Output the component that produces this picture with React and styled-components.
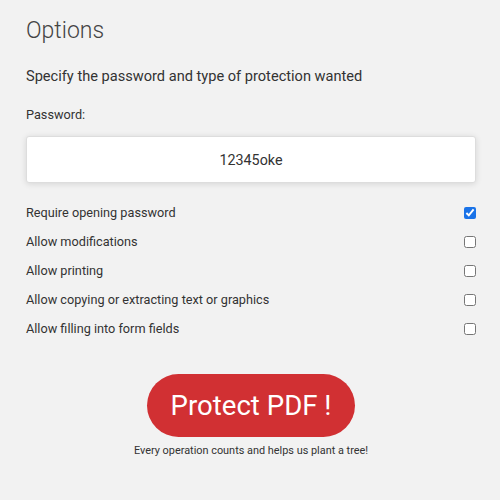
import styled, { createGlobalStyle } from "styled-components";

const Global = createGlobalStyle`
  html, body {
    margin: 0;
    background: #f2f2f2;
    font-family: Roboto, "Liberation Sans", sans-serif;
    color: #333;
  }
`;

const Page = styled.main`
  padding: 14px 24px 0 26px;
  width: 500px;
  box-sizing: border-box;
`;

const Title = styled.h1`
  margin: 0;
  font-weight: 300;
  font-size: 23px;
  line-height: 34px;
  color: #444;
`;

const Lead = styled.p`
  margin: 18px 0 0;
  font-size: 14.6px;
  line-height: 20px;
  color: #333;
`;

const Label = styled.p`
  margin: 20px 0 0;
  font-size: 12.7px;
  line-height: 18px;
  color: #333;
`;

const Field = styled.input`
  display: block;
  box-sizing: border-box;
  width: 450px;
  height: 47px;
  margin-top: 12px;
  border: 1px solid #ddd;
  border-radius: 3px;
  background: #fff;
  box-shadow: 0 1px 6px rgba(0, 0, 0, 0.12);
  text-align: center;
  font-family: inherit;
  font-size: 14.3px;
  color: #333;
  outline: none;
`;

const Options = styled.ul`
  list-style: none;
  margin: 15px 0 0;
  padding: 0;
  width: 450px;
`;

const Row = styled.li`
  display: flex;
  align-items: center;
  justify-content: space-between;
  height: 29px;
  font-size: 12.7px;
  color: #333;
`;

const Check = styled.input.attrs({ type: "checkbox" })`
  width: 12px;
  height: 12px;
  margin: 0;
  accent-color: #1a73e8;
`;

const Actions = styled.div`
  display: flex;
  flex-direction: column;
  align-items: center;
  margin-top: 31px;
  width: 450px;
`;

const Button = styled.button`
  width: 208px;
  height: 63px;
  border: none;
  border-radius: 32px;
  background: #d13033;
  color: #fff;
  font-family: inherit;
  font-size: 27.6px;
  font-weight: 400;
  cursor: pointer;
`;

const Note = styled.p`
  margin: 7px 0 0;
  font-size: 10.9px;
  line-height: 13px;
  color: #333;
`;

const options = [
  ["Require opening password", true],
  ["Allow modifications", false],
  ["Allow printing", false],
  ["Allow copying or extracting text or graphics", false],
  ["Allow filling into form fields", false],
];

export default function App() {
  return (
    <>
      <Global />
      <Page>
        <Title>Options</Title>
        <Lead>Specify the password and type of protection wanted</Lead>
        <Label>Password:</Label>
        <Field defaultValue="12345oke" />
        <Options>
          {options.map(([text, on]) => (
            <Row key={text}>
              {text}
              <Check defaultChecked={on} />
            </Row>
          ))}
        </Options>
        <Actions>
          <Button>Protect PDF !</Button>
          <Note>Every operation counts and helps us plant a tree!</Note>
        </Actions>
      </Page>
    </>
  );
}
